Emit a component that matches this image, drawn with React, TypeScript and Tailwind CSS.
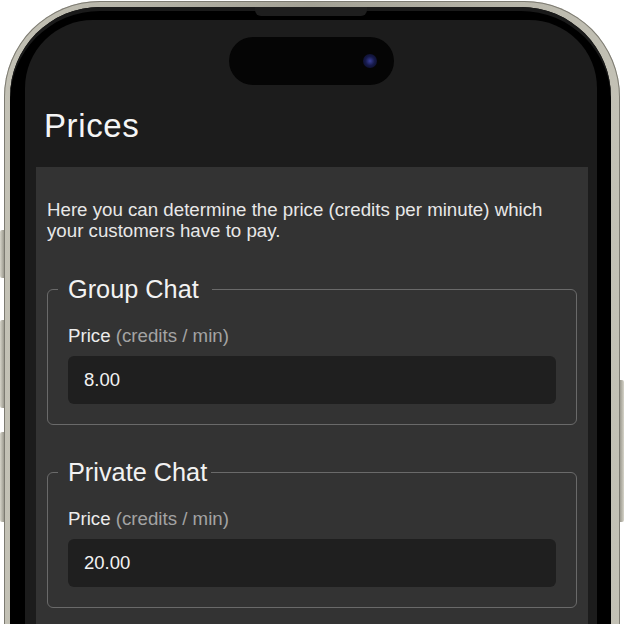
import React from 'react';

type PriceField = {
  id: string;
  title: string;
  value: string;
  legendPad: string;
};

const priceFields: PriceField[] = [
  { id: 'group', title: 'Group Chat', value: '8.00', legendPad: 'pr-[13px]' },
  { id: 'private', title: 'Private Chat', value: '20.00', legendPad: 'pr-[4px]' },
];

function PriceFieldset({ field }: { field: PriceField }) {
  return (
    <fieldset className="rounded-[6px] border border-[#6a6a6a] px-[20px] pb-[20px]">
      <legend className={`-ml-[10px] pl-[10px] ${field.legendPad} text-[25.3px] leading-[28px] text-[#f2f2f2]`}>
        {field.title}
      </legend>
      <label htmlFor={field.id} className="mt-[22px] block text-[18.7px] leading-[21px] text-[#ececec]">
        Price <span className="text-[#a3a3a3]">(credits / min)</span>
      </label>
      <input
        id={field.id}
        defaultValue={field.value}
        className="mt-[10px] block h-[48px] w-full rounded-[6px] bg-[#1f1f1f] pl-[16px] text-[18.5px] text-[#f2f2f2] outline-none"
      />
    </fieldset>
  );
}

export default function App() {
  return (
    <div
      className="flex h-[624px] w-[624px] items-start overflow-hidden bg-white"
      style={{ fontFamily: '"Liberation Sans", Arial, sans-serif' }}
    >
      {/* left hardware buttons */}
      <div className="flex w-[4px] shrink-0 flex-col">
        <div className="mt-[230px] h-[48px] rounded-l-[2px] bg-gradient-to-r from-[#d6d4c9] to-[#9c9a8f]" />
        <div className="mt-[42px] h-[88px] rounded-l-[2px] bg-gradient-to-r from-[#d6d4c9] to-[#9c9a8f]" />
        <div className="mt-[24px] h-[90px] rounded-l-[2px] bg-gradient-to-r from-[#d6d4c9] to-[#9c9a8f]" />
      </div>

      {/* phone body */}
      <div className="mt-[1px] h-[900px] w-[616px] shrink-0 rounded-[96px] bg-gradient-to-r from-[#c3c1b5] via-[#a3a195] to-[#c3c1b5] pl-[6px] pr-[9px] pt-[6px] shadow-[inset_0_0_0_1px_#7d7b72]">
        <div className="relative h-full rounded-[90px] bg-black pl-[15px] pr-[14px] pt-[13px] shadow-[inset_0_4px_0_#1a1a1a]">
          <div className="absolute left-[245px] top-0 h-[9px] w-[112px] rounded-b-[6px] bg-[#1e1e1e]" />

          {/* screen */}
          <div className="flex h-full flex-col rounded-t-[68px] bg-[#1c1c1c]">
            <div className="mt-[17px] flex h-[48px] w-[165px] items-center justify-end self-center rounded-full bg-[#050505] pr-[17px]">
              <div className="h-[14px] w-[14px] rounded-full bg-[radial-gradient(circle,#3a3f9a_0%,#161a4a_45%,#08081a_100%)]" />
            </div>

            <h1 className="mb-[25px] mt-[25px] pl-[19px] text-[33px] leading-[32px] tracking-[0.6px] text-[#f5f5f5]">Prices</h1>

            <div className="ml-[11px] mr-[9px] flex flex-1 flex-col bg-[#333333] px-[11px] pt-[32px]">
              <p className="text-[18.7px] leading-[21px] text-[#e8e8e8]">
                Here you can determine the price (credits per minute) which your customers have to pay.
              </p>
              <div className="mt-[34px] flex flex-col gap-[33px]">
                {priceFields.map((field) => (
                  <PriceFieldset key={field.id} field={field} />
                ))}
              </div>
            </div>
          </div>
        </div>
      </div>

      {/* right hardware button */}
      <div className="w-[4px] shrink-0">
        <div className="mt-[380px] h-[142px] rounded-r-[2px] bg-gradient-to-r from-[#9c9a8f] to-[#d6d4c9]" />
      </div>
    </div>
  );
}
